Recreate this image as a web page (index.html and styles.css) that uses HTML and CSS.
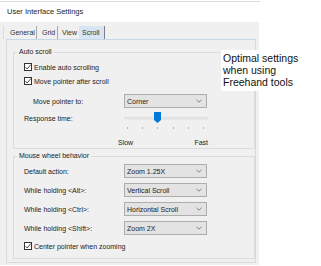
FILE: index.html
```html
<!DOCTYPE html>
<html>
<head>
<meta charset="utf-8">
<link rel="stylesheet" href="styles.css">
</head>
<body>
<div class="topline"></div>
<div class="title">User Interface Settings</div>
<div class="dialog">
  <div class="tabs">
    <div class="tab t-general">General</div>
    <div class="tab t-grid">Grid</div>
    <div class="tab t-view">View</div>
    <div class="tab t-scroll">Scroll</div>
  </div>
  <div class="panel">
    <fieldset class="group">
      <legend>Auto scroll</legend>
      <div class="rows rows-auto">
        <div class="row cbrow"><span class="cb"><svg width="8" height="8" viewBox="0 0 8 8"><path d="M1.5 4.2 L3.2 6 L6.8 1.6" fill="none" stroke="#333" stroke-width="0.9"/></svg></span>Enable auto scrolling</div>
        <div class="row cbrow"><span class="cb"><svg width="8" height="8" viewBox="0 0 8 8"><path d="M1.5 4.2 L3.2 6 L6.8 1.6" fill="none" stroke="#333" stroke-width="0.9"/></svg></span>Move pointer after scroll</div>
        <div class="row field move"><span class="lbl lbl-indent">Move pointer to:</span><div class="select">Corner<svg class="chev" width="6" height="4" viewBox="0 0 6 4"><path d="M0.5 0.8 L3 3.2 L5.5 0.8" fill="none" stroke="#666" stroke-width="0.8"/></svg></div></div>
        <div class="row field resp"><span class="lbl">Response time:</span>
          <div class="slider"><div class="track"></div><svg class="thumb" width="7" height="11" viewBox="0 0 7 11"><polygon points="0,0 7,0 7,8 3.5,11 0,8" fill="#0078d7"/></svg></div>
        </div>
        <div class="ticks"><i></i><i></i><i></i><i></i><i></i><i></i></div>
        <div class="ends"><span>Slow</span><span>Fast</span></div>
      </div>
    </fieldset>
    <fieldset class="group group2">
      <legend>Mouse wheel behavior</legend>
      <div class="rows rows-wheel">
        <div class="row field"><span class="lbl">Default action:</span><div class="select">Zoom 1.25X<svg class="chev" width="6" height="4" viewBox="0 0 6 4"><path d="M0.5 0.8 L3 3.2 L5.5 0.8" fill="none" stroke="#666" stroke-width="0.8"/></svg></div></div>
        <div class="row field gap"><span class="lbl">While holding &lt;Alt&gt;:</span><div class="select">Vertical Scroll<svg class="chev" width="6" height="4" viewBox="0 0 6 4"><path d="M0.5 0.8 L3 3.2 L5.5 0.8" fill="none" stroke="#666" stroke-width="0.8"/></svg></div></div>
        <div class="row field gap"><span class="lbl">While holding &lt;Ctrl&gt;:</span><div class="select">Horizontal Scroll<svg class="chev" width="6" height="4" viewBox="0 0 6 4"><path d="M0.5 0.8 L3 3.2 L5.5 0.8" fill="none" stroke="#666" stroke-width="0.8"/></svg></div></div>
        <div class="row field gap"><span class="lbl">While holding &lt;Shift&gt;:</span><div class="select">Zoom 2X<svg class="chev" width="6" height="4" viewBox="0 0 6 4"><path d="M0.5 0.8 L3 3.2 L5.5 0.8" fill="none" stroke="#666" stroke-width="0.8"/></svg></div></div>
        <div class="row cbrow center"><span class="cb"><svg width="8" height="8" viewBox="0 0 8 8"><path d="M1.5 4.2 L3.2 6 L6.8 1.6" fill="none" stroke="#333" stroke-width="0.9"/></svg></span>Center pointer when zooming</div>
      </div>
    </fieldset>
  </div>
</div>
<div class="note">Optimal settings<br>when using<br>Freehand tools</div>
</body>
</html>
```
FILE: styles.css
```css
html, body {
  margin: 0;
  padding: 0;
  background: #ffffff;
}
body {
  position: relative;
  width: 321px;
  height: 266px;
  overflow: hidden;
  font-family: "Liberation Sans", Arial, sans-serif;
  font-size: 7px;
  color: #222222;
}
.topline {
  margin-top: 1px;
  width: 260px;
  height: 1px;
  background: #dadada;
}
.title {
  height: 20px;
  line-height: 20px;
  padding-left: 7px;
  font-size: 7.5px;
  color: #1e1e1e;
}
.dialog {
  width: 259px;
  height: 243px;
  background: #f0f0f0;
  padding-top: 4px;
  box-sizing: border-box;
}
.tabs {
  display: flex;
  height: 13px;
  margin-left: 3px;
  border-left: 1px solid #dcdcdc;
  line-height: 13px;
}
.tab {
  box-sizing: border-box;
  height: 13px;
  color: #333;
}
.t-general {
  padding-left: 6px;
  width: 33px;
  border-right: 1px solid #a9a9a9;
}
.t-grid {
  padding-left: 5px;
  width: 21px;
  border-right: 1px solid #a9a9a9;
}
.t-view {
  padding-left: 4px;
  width: 21px;
}
.t-scroll {
  padding-left: 3px;
  width: 26px;
  background: #d7e5f3;
  border-right: 1px solid #7f7f7f;
}
.panel {
  margin-left: 6px;
  width: 250px;
  height: 224px;
  box-sizing: border-box;
  border: 1px solid #d9d9d9;
  border-top-color: #c6d7ea;
  padding: 8px 1px 0 6px;
}
.group {
  margin: 0;
  padding: 0;
  border: 1px solid #dcdcdc;
  min-width: 0;
  width: 242px;
  box-sizing: border-box;
}
.group legend {
  margin-left: 3px;
  padding: 0 2px;
  line-height: 8px;
  height: 8px;
  color: #222;
}
.group2 {
  margin-top: 3px;
}
.rows {
  padding-left: 10px;
}
.rows-auto {
  padding-top: 4px;
}
.rows-wheel {
  padding-top: 4px;
  padding-bottom: 5px;
}
.row {
  height: 14px;
  display: flex;
  align-items: center;
}
.cbrow .cb {
  width: 8px;
  height: 8px;
  box-sizing: border-box;
  border: 1px solid #333;
  background: #fff;
  margin-right: 2px;
  display: flex;
}
.cb svg {
  margin: -1px;
}
.move {
  margin-top: 6px;
}
.resp {
  margin-top: 3px;
}
.gap {
  margin-top: 5px;
}
.center {
  margin-top: 4px;
}
.lbl {
  width: 100px;
  flex: none;
}
.lbl-indent {
  padding-left: 9px;
  box-sizing: border-box;
}
.select {
  width: 83px;
  height: 14px;
  box-sizing: border-box;
  border: 1px solid #adadad;
  background: #e3e3e3;
  display: flex;
  align-items: center;
  padding-left: 2px;
  position: relative;
  color: #222;
}
.chev {
  margin-left: auto;
  margin-right: 4px;
}
.slider {
  position: relative;
  width: 84px;
  height: 14px;
}
.track {
  position: absolute;
  left: 0;
  right: 0;
  top: 6px;
  height: 3px;
  background: #e6e6e6;
  border-top: 1px solid #dedede;
  box-sizing: border-box;
}
.thumb {
  position: absolute;
  left: 30px;
  top: 1px;
}
.ticks {
  margin-top: 2px;
  margin-left: 100px;
  width: 84px;
  height: 2px;
  box-sizing: border-box;
  padding: 0 4px 0 3px;
  display: flex;
  justify-content: space-between;
}
.ticks i {
  width: 1px;
  height: 2px;
  background: #b5b5b5;
}
.ends {
  margin-top: 8px;
  margin-left: 94px;
  width: 90px;
  height: 11px;
  line-height: 11px;
  display: flex;
  justify-content: space-between;
}
.note {
  position: absolute;
  left: 221px;
  top: 50px;
  width: 80px;
  padding: 2px 0 3px 2px;
  background: #ffffff;
  font-size: 10.5px;
  line-height: 12px;
  color: #111;
}
```
